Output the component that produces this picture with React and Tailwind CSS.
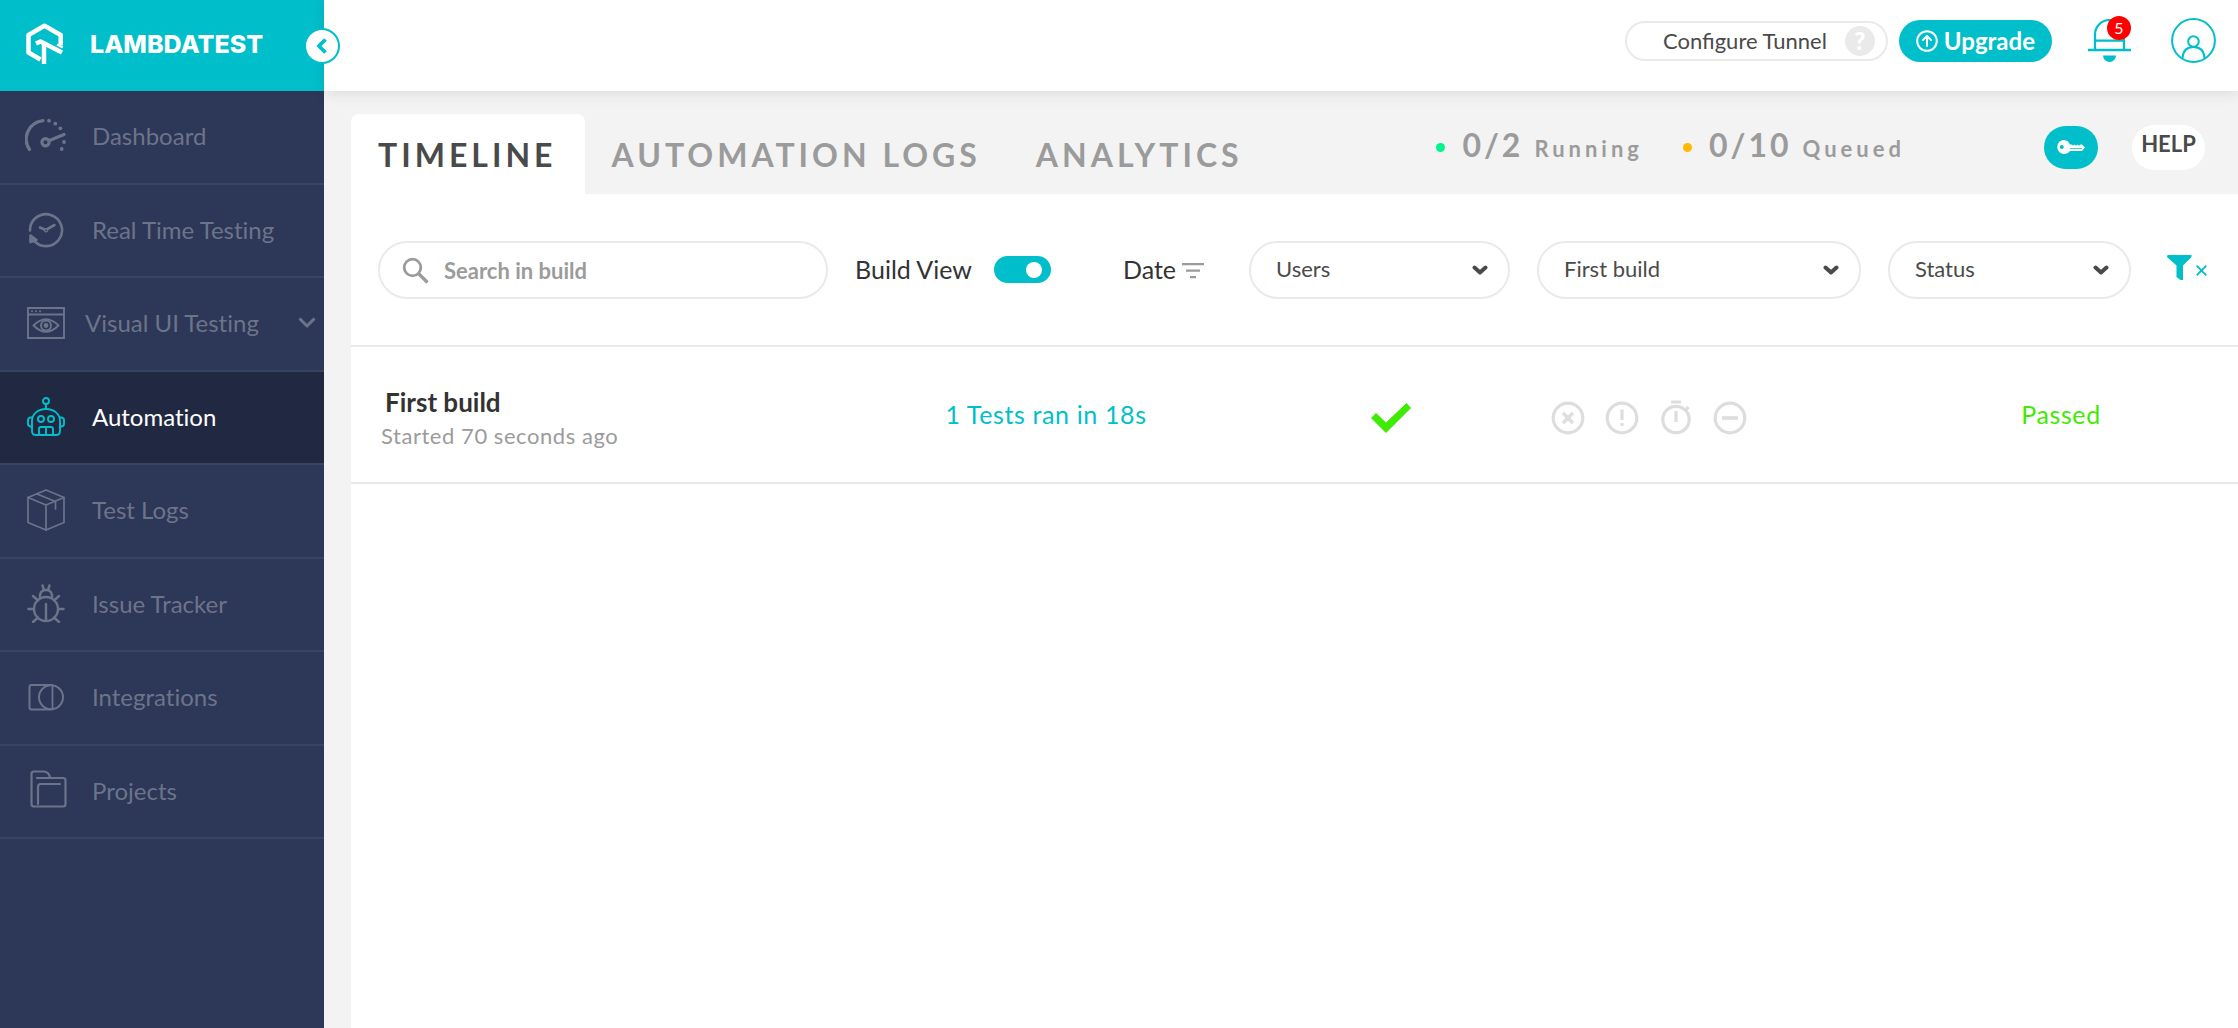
import React from 'react';

const line = { fill: 'none', stroke: 'currentColor', strokeLinecap: 'round', strokeLinejoin: 'round' };

function Logo() {
  return (
    <svg width="38" height="42" viewBox="0 0 38 42" fill="none" stroke="currentColor" strokeWidth="4.5" strokeLinejoin="round" className="shrink-0" aria-hidden="true">
      <path d="M34.7 22.5V12L18.5 2.8L2.5 12v17.5L14.5 36.5" />
      <path d="M10 20.5L14.5 18.5L36 29.5" strokeLinejoin="miter" />
      <path d="M18 19.5V41" />
      <path d="M31 21.5L36.7 24.5" strokeWidth="2.5" />
    </svg>
  );
}

function DashboardIcon() {
  return (
    <svg width="42" height="36" viewBox="0 0 42 36" {...line} strokeWidth="3.2" className="shrink-0" aria-hidden="true">
      <path d="M4.5 31.5A18.5 18.5 0 0 1 18 2.7" />
      <circle cx="20.5" cy="24.3" r="3.6" />
      <path d="M24.5 22.5L39 16.5" />
      <g fill="currentColor" stroke="none">
        <circle cx="24" cy="2.7" r="1.9" />
        <circle cx="30.3" cy="5.7" r="1.9" />
        <circle cx="35.3" cy="10.3" r="1.9" />
        <circle cx="39" cy="24" r="1.9" />
        <circle cx="36.7" cy="31" r="1.9" />
      </g>
    </svg>
  );
}

function RealTimeIcon() {
  return (
    <svg width="36" height="36" viewBox="0 0 36 36" {...line} strokeWidth="2.6" className="shrink-0" aria-hidden="true">
      <path d="M2 18.5A16 16 0 1 1 5 27.5" />
      <path d="M2.5 23.5L8.5 28L2.5 30Z" fill="currentColor" />
      <path d="M12 15.5L16.5 17.5M19.5 17L26.5 13" />
      <circle cx="18" cy="18.3" r="1.6" strokeWidth="1.2" />
    </svg>
  );
}

function VisualIcon() {
  return (
    <svg width="38" height="32" viewBox="0 0 38 32" {...line} strokeWidth="1.9" className="shrink-0" aria-hidden="true">
      <path d="M1 1H37V31H1ZM1 7.5H37" strokeLinejoin="miter" />
      <path d="M5 4.2h.1M9 4.2h.1M13 4.2h.1" />
      <path d="M6.5 18.5Q19 6 31.5 18.5Q19 31 6.5 18.5Z" />
      <circle cx="19" cy="18.5" r="5" />
      <circle cx="19" cy="18.5" r="1.5" fill="currentColor" />
    </svg>
  );
}

function RobotIcon() {
  return (
    <svg width="38" height="39" viewBox="0 0 38 39" {...line} strokeWidth="1.9" className="shrink-0" aria-hidden="true">
      <circle cx="19" cy="4" r="3" />
      <path d="M19 7V12" />
      <path d="M5 34V24C5 17 11 12 19 12S33 17 33 24V34Q33 38 29 38H9Q5 38 5 34Z" />
      <path d="M5 20.5H3.5Q1 21 1 23V27Q1 29 3.5 29.5H5M33 20.5H34.5Q37 21 37 23V27Q37 29 34.5 29.5H33" />
      <circle cx="14" cy="22" r="3" />
      <circle cx="24" cy="22" r="3" />
      <path d="M12 38V32Q12 30 14 30H24Q26 30 26 32V38M19 30V38" />
    </svg>
  );
}

function BoxIcon() {
  return (
    <svg width="38" height="42" viewBox="0 0 38 42" {...line} strokeWidth="1.7" className="shrink-0" aria-hidden="true">
      <path d="M19 1L37 8.5V33.5L19 41L1 33.5V8.5Z" />
      <path d="M1 8.5L19 16L37 8.5M19 16V41" />
      <path d="M10 5L28.5 12.5V20M10 5L28.5 12.5" />
    </svg>
  );
}

function BugIcon() {
  return (
    <svg width="38" height="39" viewBox="0 0 38 39" {...line} strokeWidth="2.4" className="shrink-0" aria-hidden="true">
      <circle cx="19" cy="25" r="12" />
      <path d="M19 20V36" />
      <path d="M13 13.5V11Q14 6 19 6T25 11V13.5" />
      <path d="M15.5 1.5L17 6M22.5 1.5L21 6" />
      <path d="M1.5 25H7M31 25H36.5M6 12L11 16.5M32 12L27 16.5M6 38L11 33.5M32 38L27 33.5" />
    </svg>
  );
}

function IntegrationsIcon() {
  return (
    <svg width="36" height="27" viewBox="0 0 36 27" {...line} strokeWidth="2" className="shrink-0" aria-hidden="true">
      <path d="M23 1H3.5Q1.5 1 1.5 3V23.5Q1.5 25.5 3.5 25.5H23" />
      <circle cx="23" cy="13.3" r="12" />
      <path d="M24.5 1V25" strokeWidth="1.8" />
    </svg>
  );
}

function ProjectsIcon() {
  return (
    <svg width="42" height="42" viewBox="-5 0 42 42" {...line} strokeWidth="2.2" className="shrink-0" aria-hidden="true">
      <path d="M7 8H33Q35.5 8 35.5 10.5V34Q35.5 36.5 33 36.5H4Q1.5 36.5 1.5 34V4Q1.5 1.5 4 1.5H14Q19 2 20 7.5" />
      <path d="M30 14H11Q8 14 8 17V34" />
    </svg>
  );
}

function BellIcon() {
  return (
    <svg width="43" height="44" viewBox="0 0 43 44" fill="none" stroke="currentColor" strokeWidth="2.2" aria-hidden="true">
      <path d="M7 31V15.5A14.5 14.5 0 0 1 36 15.5V31M7 21.7H36" />
      <path d="M0 31H43" strokeWidth="2.6" />
      <path d="M15 36.5H28A6.5 6.5 0 0 1 15 36.5Z" fill="currentColor" stroke="none" />
    </svg>
  );
}

function UserIcon() {
  return (
    <svg width="45" height="45" viewBox="0 0 45 45" fill="none" stroke="currentColor" strokeWidth="2" aria-hidden="true">
      <circle cx="22.5" cy="22.5" r="21.4" />
      <circle cx="22.5" cy="23.5" r="5.3" />
      <path d="M11.5 40.5Q12 29 22.5 29T33.5 40.5" />
    </svg>
  );
}

function KeyIcon() {
  return (
    <svg width="28" height="14" viewBox="0 0 28 14" fill="currentColor" aria-hidden="true">
      <path fillRule="evenodd" d="M7 0A7 7 0 0 1 13 4.5H15L16 5.8L17.5 4.5L19 5.8L20.5 4.5L22 5.8L23.5 4.5H25L28 7.5L25 11H13A7 7 0 1 1 7 0ZM4.8 5A2 2 0 1 0 4.8 9A2 2 0 1 0 4.8 5ZM13 8.3V9.1H25V8.3Z" />
    </svg>
  );
}

function ChevronDown({ className }) {
  return (
    <svg width="16" height="10" viewBox="0 0 16 10" {...line} strokeWidth="4" className={className} aria-hidden="true">
      <path d="M2.5 2.5L8 7.5L13.5 2.5" />
    </svg>
  );
}

const navItems = [
  { label: 'Dashboard', Icon: DashboardIcon },
  { label: 'Real Time Testing', Icon: RealTimeIcon },
  { label: 'Visual UI Testing', Icon: VisualIcon, expandable: true },
  { label: 'Automation', Icon: RobotIcon, active: true },
  { label: 'Test Logs', Icon: BoxIcon },
  { label: 'Issue Tracker', Icon: BugIcon },
  { label: 'Integrations', Icon: IntegrationsIcon },
  { label: 'Projects', Icon: ProjectsIcon },
];

function NavItem({ label, Icon, active, expandable }) {
  return (
    <li className={active ? 'border-b-2 border-[#3a4362] bg-[#212942]' : 'border-b-2 border-[#3a4362]'}>
      <a
        href="#"
        aria-current={active ? 'page' : undefined}
        className={`flex h-full items-center pr-2 pb-px pl-[27px] ${expandable ? 'gap-5' : 'gap-[27px]'} ${active ? 'text-white' : 'text-[#6c748a]'}`}
      >
        <span className={active ? 'flex w-[38px] justify-center text-[#00bfcb]' : 'flex w-[38px] justify-center'}>
          <Icon />
        </span>
        <span className="text-2xl leading-8 [font-variant-ligatures:none]">{label}</span>
        {expandable && (
          <svg width="18" height="12" viewBox="0 0 18 12" fill="none" stroke="currentColor" strokeWidth="3" className="ml-auto" aria-hidden="true">
            <path d="M1.5 1.5L9 9L16.5 1.5" />
          </svg>
        )}
      </a>
    </li>
  );
}

function Sidebar() {
  return (
    <aside className="w-[324px] shrink-0 bg-[#2d3757]">
      <div className="relative flex h-[91px] items-center gap-[26px] bg-[#00bfcb] pb-1 pl-[26px] text-white">
        <Logo />
        <span className="font-['Inter'] text-[25px] leading-8 font-extrabold">LAMBDATEST</span>
        <button
          type="button"
          aria-label="Collapse sidebar"
          className="absolute top-7 -right-4 z-10 flex h-9 w-9 items-center justify-center rounded-full border-2 border-[#00bfcb] bg-white text-[#00bfcb]"
        >
          <svg width="12" height="16" viewBox="0 0 12 16" fill="none" stroke="currentColor" strokeWidth="3.8" aria-hidden="true">
            <path d="M9.5 1.5L3 8L9.5 14.5" />
          </svg>
        </button>
      </div>
      <nav aria-label="Main">
        <ul className="grid h-[748px] grid-rows-8">
          {navItems.map((item) => (
            <NavItem key={item.label} {...item} />
          ))}
        </ul>
      </nav>
    </aside>
  );
}

function Header() {
  return (
    <header className="relative flex h-[91px] items-center justify-end bg-white pr-[22px] pb-[10px] shadow-[0_2px_14px_rgba(0,0,0,0.10)]">
      <button type="button" className="mr-[11px] flex h-10 items-center gap-[18px] rounded-full border-2 border-[#eaeaea] pr-[11px] pl-9 text-[22px] leading-7 text-[#4a4a4a]">
        Configure Tunnel
        <span className="flex h-[30px] w-[30px] items-center justify-center rounded-full bg-[#eaeaea] text-2xl leading-none font-black text-white">?</span>
      </button>
      <button type="button" className="mr-9 flex h-[42px] items-center gap-[6px] rounded-full bg-[#00bfcb] px-[17px] text-2xl leading-8 font-bold text-white">
        <svg width="22" height="22" viewBox="0 0 22 22" {...line} strokeWidth="2" aria-hidden="true">
          <circle cx="11" cy="11" r="9.8" />
          <path d="M11 16V6.5M7 10L11 6L15 10" />
        </svg>
        Upgrade
      </button>
      <button type="button" aria-label="Notifications" className="relative mr-10 text-[#00bfcb]">
        <BellIcon />
        <span className="absolute -top-[3px] right-0 flex h-6 w-6 items-center justify-center rounded-full bg-[#ff0000] text-base leading-none text-white">5</span>
      </button>
      <button type="button" aria-label="Account" className="text-[#00bfcb]">
        <UserIcon />
      </button>
    </header>
  );
}

function Counter({ dot, count, label }) {
  return (
    <div className="flex items-baseline font-bold text-[#9b9b9b]">
      <span className={`mr-[17px] h-[9px] w-[9px] self-center rounded-full ${dot}`} />
      <span className="mr-[11px] text-[32px] leading-10 tracking-[3px]">{count}</span>
      <span className="text-[22px] leading-10 tracking-[4px]">{label}</span>
    </div>
  );
}

function Tabs() {
  const tab = 'flex items-center rounded-t-lg pt-[2px] pr-7 pl-[27px] text-[32px] leading-10 font-bold tracking-[4px] whitespace-nowrap';
  return (
    <div className="flex h-20">
      <div role="tablist" className="flex">
        <button type="button" role="tab" aria-selected="true" className={`${tab} bg-white text-[#4a4a4a]`}>TIMELINE</button>
        <button type="button" role="tab" aria-selected="false" className={`${tab} text-[#9b9b9b]`}>AUTOMATION LOGS</button>
        <button type="button" role="tab" aria-selected="false" className={`${tab} text-[#9b9b9b]`}>ANALYTICS</button>
      </div>
      <div className="ml-auto flex h-[66px] items-center pr-[33px] whitespace-nowrap">
        <div className="mr-[139px] flex gap-10">
          <Counter dot="bg-[#00f58f]" count="0/2" label="Running" />
          <Counter dot="bg-[#ffb900]" count="0/10" label="Queued" />
        </div>
        <button type="button" aria-label="Access key" className="mr-[34px] flex h-[43px] w-[54px] items-center justify-center rounded-full bg-[#00bfcb] text-white">
          <KeyIcon />
        </button>
        <button type="button" className="flex h-[45px] w-[73px] items-center justify-center rounded-full bg-white pb-[6px] text-[22px] leading-7 font-bold text-[#4a4a4a]">HELP</button>
      </div>
    </div>
  );
}

function FilterSelect({ label, width }) {
  return (
    <div className={`relative ${width} shrink-0`}>
      <select aria-label={label} className="block h-[58px] w-full appearance-none rounded-full border-2 border-[#eaeaea] bg-white px-[25px] pb-[3px] text-[22px] text-[#4a4a4a]">
        <option>{label}</option>
      </select>
      <ChevronDown className="pointer-events-none absolute top-6 right-[22px] text-[#4a4a4a]" />
    </div>
  );
}

function Filters() {
  return (
    <div className="flex items-center border-b-2 border-[#e9e9e9] pt-[47px] pr-[31px] pb-[46px] pl-[27px]">
      <label className="flex h-[58px] min-w-0 flex-1 items-center gap-[15px] rounded-full border-2 border-[#eaeaea] px-[22px] text-[#9b9b9b]">
        <svg width="27" height="27" viewBox="0 0 27 27" fill="none" stroke="currentColor" strokeWidth="2.8" className="shrink-0" aria-hidden="true">
          <circle cx="10.5" cy="10.5" r="8.3" />
          <path d="M16.5 16.5L25.5 25.5" strokeWidth="3.2" />
        </svg>
        <input type="text" aria-label="Search in build" placeholder="Search in build" className="w-full min-w-0 text-[22px] font-bold outline-none placeholder:text-[#9b9b9b]" />
      </label>
      <label className="mr-[72px] ml-[27px] flex items-center gap-[22px] pb-[2px] text-[25px] leading-8 whitespace-nowrap text-[#333333]">
        Build View
        <input
          type="checkbox"
          role="switch"
          defaultChecked
          className="h-[27px] w-[57px] cursor-pointer appearance-none rounded-full bg-[#cccccc] before:mt-[6px] before:ml-2 before:block before:h-4 before:w-4 before:rounded-full before:bg-white checked:bg-[#00bfcb] checked:before:ml-8"
        />
      </label>
      <button type="button" className="mr-[45px] flex items-center gap-[6px] pb-[2px] text-[25px] leading-8 text-[#333333]">
        Date
        <svg width="22" height="16" viewBox="0 0 22 16" className="mt-1 text-[#9b9b9b]" fill="currentColor" aria-hidden="true">
          <path d="M0 0H22V2.2H0ZM4 6.5H18V8.7H4ZM8 13H14V15.2H8Z" />
        </svg>
      </button>
      <div className="flex gap-[27px]">
        <FilterSelect label="Users" width="w-[261px]" />
        <FilterSelect label="First build" width="w-[324px]" />
        <FilterSelect label="Status" width="w-[243px]" />
      </div>
      <button type="button" aria-label="Clear filters" className="ml-9 flex items-center gap-1 text-[#00bfcb]">
        <svg width="25" height="25" viewBox="0 0 25 25" fill="currentColor" className="mb-[6px]" aria-hidden="true">
          <path d="M0.5 0H24.5V2L16 10.5V25L13.5 25L9.5 22V10.5L0 2Z" />
        </svg>
        <svg width="11" height="11" viewBox="0 0 11 11" fill="none" stroke="currentColor" strokeWidth="1.8" aria-hidden="true">
          <path d="M0.7 0.7L10.3 10.3M10.3 0.7L0.7 10.3" />
        </svg>
      </button>
    </div>
  );
}

function StatusIcons() {
  return (
    <div className="flex items-center gap-5 pt-[7px] text-[#dddddd]">
      <svg width="34" height="34" viewBox="0 0 34 34" fill="none" stroke="currentColor" strokeWidth="3.2" role="img" aria-label="Failed">
        <circle cx="17" cy="17" r="14.8" />
        <path d="M12 12L22 22M22 12L12 22" />
      </svg>
      <svg width="34" height="34" viewBox="0 0 34 34" fill="none" stroke="currentColor" strokeWidth="3.2" role="img" aria-label="Error">
        <circle cx="17" cy="17" r="14.8" />
        <path d="M17 8.5V19M17 22V25" />
      </svg>
      <svg width="34" height="36" viewBox="0 0 34 36" fill="none" stroke="currentColor" strokeWidth="3.2" role="img" aria-label="Timed out">
        <circle cx="17" cy="19.5" r="13.2" />
        <path d="M12 2H22M17 11V22M26 10.5L29.5 7" />
      </svg>
      <svg width="34" height="34" viewBox="0 0 34 34" fill="none" stroke="currentColor" strokeWidth="3.2" role="img" aria-label="Skipped">
        <circle cx="17" cy="17" r="14.8" />
        <path d="M9 17H25" strokeWidth="3.6" />
      </svg>
    </div>
  );
}

function BuildRow() {
  return (
    <div className="grid h-[137px] grid-cols-[500fr_390fr_300fr_343fr_354fr] items-center border-b-2 border-[#e9e9e9]">
      <div className="pt-2 pl-[30px]">
        <h2 className="pl-1 text-[26px] leading-[34px] font-bold text-[#333333]">First build</h2>
        <p className="text-[22px] leading-[34px] tracking-wide text-[#9b9b9b]">Started 70 seconds ago</p>
      </div>
      <a href="#" className="pb-[2px] text-center text-[25px] leading-8 tracking-wide text-[#00bfcb]">1 Tests ran in 18s</a>
      <div className="flex justify-center pt-[7px]">
        <svg width="40" height="30" viewBox="0 0 40 30" fill="#3feb00" role="img" aria-label="Passed">
          <path d="M35.5 0L40 5L15 30L0 15L5 10L15 19.5Z" />
        </svg>
      </div>
      <div className="pl-[10px]">
        <StatusIcons />
      </div>
      <span className="pb-[2px] text-center text-[25px] leading-8 tracking-wide text-[#3feb00]">Passed</span>
    </div>
  );
}

export default function App() {
  return (
    <div className="flex min-h-screen bg-[#f3f3f3] font-['Lato',sans-serif]">
      <Sidebar />
      <div className="flex min-w-0 flex-1 flex-col">
        <Header />
        <main className="flex flex-1 flex-col pt-[23px] pl-[27px]">
          <Tabs />
          <section className="flex-1 bg-white">
            <Filters />
            <BuildRow />
          </section>
        </main>
      </div>
    </div>
  );
}
